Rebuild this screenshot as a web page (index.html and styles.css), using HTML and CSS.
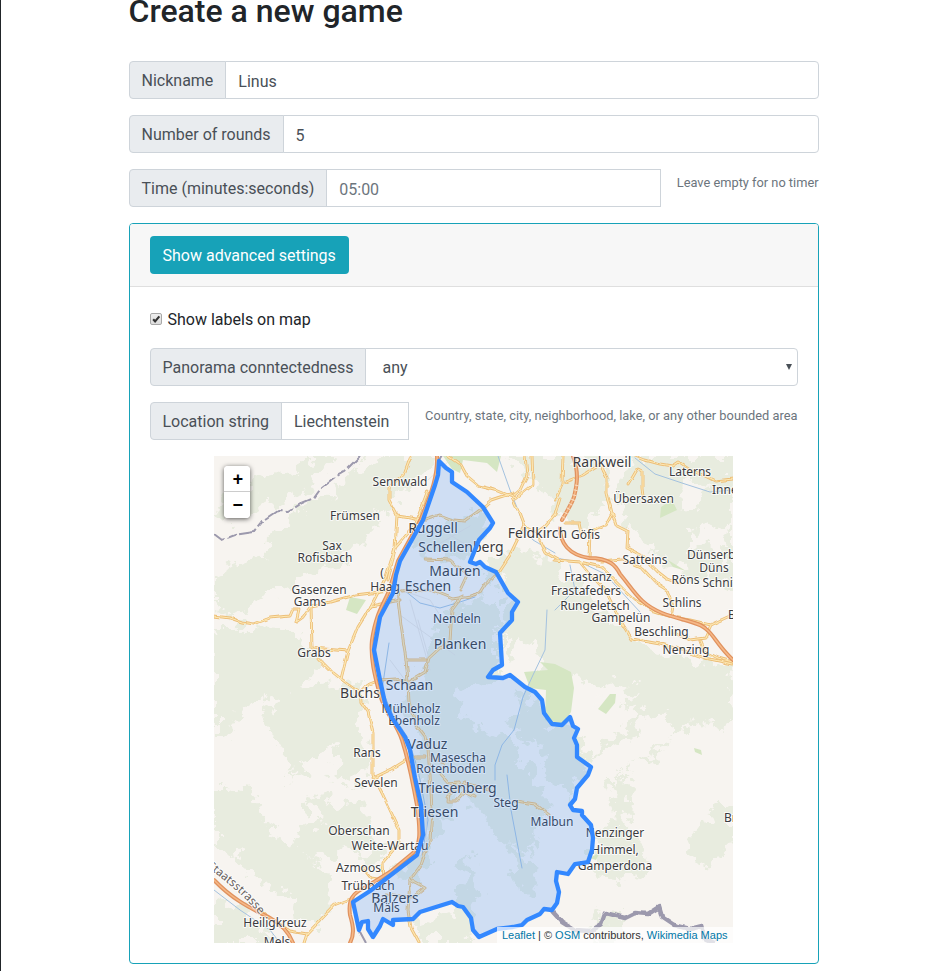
FILE: index.html
```html
<!DOCTYPE html>
<html lang="en">
<head>
<meta charset="utf-8">
<title>Create a new game</title>
<link rel="stylesheet" href="styles.css">
</head>
<body>
<main class="container">
  <h2 class="title">Create a new game</h2>
  <form>
    <div class="group"><label class="tag" for="nick">Nickname</label><input class="field end" id="nick" type="text" value="Linus"></div>
    <div class="group"><label class="tag" for="rounds">Number of rounds</label><input class="field end" id="rounds" type="text" value="5"></div>
    <div class="group"><label class="tag" for="time">Time (minutes:seconds)</label><input class="field" id="time" type="text" placeholder="05:00"><small class="hint short">Leave empty for no timer</small></div>
    <section class="card">
      <header class="card-header"><button class="btn" type="button">Show advanced settings</button></header>
      <div class="card-body">
        <label class="check"><span class="box"><svg viewBox="0 0 12 12"><path d="M2.6 6.4 4.9 8.8 10 2.8"/></svg></span><span class="check-text">Show labels on map</span></label>
        <div class="group"><span class="tag tight">Panorama conntectedness</span><div class="field end select"><span>any</span><svg class="arrow" viewBox="0 0 6 6"><path d="M0 0h6L3 6z"/></svg></div></div>
        <div class="group"><label class="tag" for="loc">Location string</label><input class="field loc" id="loc" type="text" value="Liechtenstein"><small class="hint">Country, state, city, neighborhood, lake, or any other bounded area</small></div>
        <div class="map">
          <svg class="tiles" viewBox="214 456 519 487" preserveAspectRatio="none">
            <defs>
              <filter id="rough" x="-5%" y="-5%" width="110%" height="110%"><feTurbulence type="fractalNoise" baseFrequency=".07" numOctaves="4" seed="4"/><feDisplacementMap in="SourceGraphic" scale="34" xChannelSelector="R" yChannelSelector="G"/></filter>
              <filter id="wobble" x="-5%" y="-5%" width="110%" height="110%"><feTurbulence type="fractalNoise" baseFrequency=".08" numOctaves="2" seed="7"/><feDisplacementMap in="SourceGraphic" scale="4" xChannelSelector="R" yChannelSelector="G"/></filter>
              <g id="roads">
                <path d="M214 616 230 618 242 622 254 624 270 618 290 616 293 609 299 609 296 622 303 617 311 606 330 602 355 595 388 591"/>
                <path d="M311 606 312 648 348 651M371 606 358 627 348 651 341 679M318 658 330 670 341 679 360 692 367 685 380 680 396 679 410 682"/>
                <path d="M360 692 361 702 368 712 373 733 373 775 382 793 399 829 399 843 383 862 384 880M373 778 392 769 408 759M384 880 371 878 363 868M353 898 335 905 307 934 304 943M307 934 290 931 269 918 262 912"/>
                <path d="M411 456 404 475 389 488 389 500 397 515 395 549 388 580M397 515 411 517 425 520 440 515 453 520 465 521 480 510 491 500 500 497 513 493"/>
                <path d="M400 600 371 606 386 577 395 548 415 525 428 490"/>
                <path d="M448 456 461 465 467 476 479 486 495 490 507 495 516 498 533 484 532 456M525 456 527 475 520 490 512 497 518 510 524 526 537 533 546 552 560 560M524 526 510 555 500 570 485 585 480 593 470 596 453 599 430 590 401 592"/>
                <path d="M560 498 555 515 544 528 537 533M565 482 583 475 600 464 607 478 607 493 612 513 616 524 628 530 627 548 641 555 658 572 667 579 680 584"/>
                <path d="M563 456 562 484 555 500M565 523 580 523 582 533M612 513 605 526 590 532 589 558 602 561 622 559M555 560 580 562 601 567 623 589 635 600 655 612 671 617M580 562 590 574 605 590 620 620 632 639 660 644 682 650 705 658 733 664"/>
                <path d="M623 559 642 568 656 583 667 590 673 606 671 617 690 620 711 625 733 615M711 625 705 638 690 640 675 633M700 641 704 651 718 658 733 662"/>
                <path d="M635 456 645 460 660 464 672 466 678 462 690 470 705 476 715 481 733 479M628 485 638 468 642 470 642 488 643 495"/>
                <path d="M397 590 401 625 406 660 408 681 409 703 415 723 425 736 428 750 430 775 432 810 430 840 421 865 410 880 408 910 411 928 419 943"/>
                <path d="M410 681 425 672 429 658 440 648 450 641 452 610 458 602 462 595M406 660 426 660M460 590 467 575 450 560 425 559"/>
                <path d="M415 757 425 757M430 758 445 762 441 775 448 783 459 782 449 792 448 802 455 802 465 791 475 796M447 797 465 783 490 790M515 801 535 804 549 815M410 880 425 888 414 897 400 896 386 894"/>
              </g>
              <path id="motorway" d="M437 456 C438 480 428 500 421 519 L398 561 389 591 C382 607 376 614 372 640 C370 660 376 680 380 695 C386 715 396 722 402 740 C410 765 412 780 417 805 C421 835 420 845 413 853 L390 872 366 887 C352 893 348 900 350 915 C354 928 354 935 350 943M560 528 C560 543 569 555 589 558 C610 558 616 566 620 574 C635 592 640 604 662 613 C680 620 700 622 706 629 C714 635 718 646 733 660M573 456 C580 475 576 488 574 497 Q572 503 562 520M214 880 C235 902 255 910 270 918 C285 926 290 935 293 943"/>
            </defs>
            <rect x="214" y="456" width="519" height="487" fill="#f7f4f0"/>
            <g fill="#e8ecdf" filter="url(#rough)">
              <path d="M380 456 440 456 395 500 355 550 315 575 270 595 235 615 214 610 214 575 260 555 300 510 345 485 365 460ZM214 520 240 523 262 507 295 497 325 475 330 456 310 456 290 473 250 483 225 500Z"/>
              <path d="M214 626 280 628 325 655 300 690 250 705 225 735 214 735ZM280 690 370 680 355 735 330 750 290 775 280 740 265 725ZM350 718 370 738 368 765 355 790 330 778ZM330 725 300 778 286 787 312 750Z"/>
              <path d="M214 785 250 790 275 840 325 865 330 895 305 900 270 885 214 840ZM295 830 345 820 350 850 320 860 290 850ZM305 795 355 805 390 850 375 865 335 840ZM300 885 340 900 320 920 294 920ZM214 900 240 905 280 943 214 943Z"/>
              <path d="M500 456 600 456 610 500 585 530 555 515 535 477ZM630 456 733 456 733 590 700 580 665 560 625 525 620 490Z"/>
              <path d="M480 565 520 548 560 565 590 600 650 650 733 670 733 700 690 720 640 715 610 690 570 680 540 683 510 665 500 625 518 600Z"/>
              <path d="M735 690 650 710 600 745 585 760 620 745 650 715 680 715 665 750 620 775 615 790 640 760 695 725 733 722ZM605 775 630 775 628 830 645 850 620 865 595 840 617 820ZM590 850 640 850 650 870 625 880 590 875ZM700 820 733 800 733 840 705 870 690 855Z"/>
              <path d="M450 605 500 600 500 672 480 700 430 740 400 710 425 660ZM415 735 450 715 510 740 530 770 550 800 530 850 500 840 475 805 455 790 430 860 415 885 390 875 425 840ZM520 690 550 720 530 745 505 725ZM535 730 575 720 590 765 565 800 545 770Z"/>
              <path d="M410 535 470 520 480 505 490 525 465 560 415 550ZM470 850 480 910 470 930 455 900ZM515 840 540 880 520 900ZM600 910 620 906 622 943 590 943ZM420 920 460 907 475 943 420 943Z"/>
            </g>
            <g fill="#f7f4f0" filter="url(#rough)"><path d="M455 690 505 680 525 710 505 732 470 725ZM520 640 540 650 535 690 505 676ZM680 480 710 488 700 510 675 503ZM690 530 733 524 718 550 690 548ZM610 505 623 514 615 523ZM605 680 625 690 640 688 615 710 600 705Z"/></g>
            <g fill="#d5e6c3"><path d="M443 456H501L497 472 487 463 463 460 460 473 452 469ZM524 672 548 670 540 662 555 664 571 672 574 688 571 712 560 727 545 720 546 690 530 688ZM350 597 366 600 357 614 346 610ZM610 694 616 694 615 703 606 714 598 709ZM694 748 701 750 702 755 695 752ZM661 507 672 500 677 510 660 518ZM668 560 686 571 673 567ZM590 858 600 852 596 860Z"/></g>
            <g class="water"><path d="M498 456 510 490 526 530 533 540 555 553M404 590 420 603 440 608 460 602 475 597M547 610 545 650 533 675 523 697 514 730 502 745 495 765 495 780M389 643 382 690 393 715 408 738 418 770 428 820 422 855M507 775 511 810 522 868M635 458 655 474 685 484 710 492 733 490M555 558 580 562 605 574 640 612M214 890 240 910 270 930 280 943M718 645 733 663M555 610 575 590 570 565"/></g>
            <g class="lanes"><path d="M401 590 430 600 447 626M400 615 455 655M410 600 430 670M418 620 428 655M390 660 405 680M428 750 426 850M450 535 475 550M428 480 450 460M437 545 470 526"/></g>
            <use href="#roads" class="road-case" filter="url(#wobble)"/><use href="#roads" class="road" filter="url(#wobble)"/>
            <use href="#motorway" class="mw-case"/><use href="#motorway" class="mw"/>
            <path class="mw-dash" d="M577 485 574 497 Q572 503 562 520"/>
            <g class="border" filter="url(#wobble)"><path stroke-dasharray="18 3 9 3" d="M360 456 344 472 335 477 322 487 314 498 302 503 288 512 278 511 263 521 254 532 235 535 222 540 214 534"/><path class="thick" d="M552 911 562 922 575 930 590 931 601 924 605 913 625 918 635 913 648 914 659 907 662 917 674 925 690 929 702 926 706 940 714 943"/><path d="M359 930 366 943M439 461 442 456"/></g>
            <g class="labels">
              <g class="town"><text x="602" y="467">Rankweil</text><text x="537.5" y="538">Feldkirch</text><text x="433" y="533">Ruggell</text><text x="461" y="552">Schellenberg</text><text x="455" y="576">Mauren</text><text x="428" y="591">Eschen</text><text x="460" y="649">Planken</text><text x="409.5" y="690">Schaan</text><text x="360" y="698">Buchs</text><text x="427.5" y="749">Vaduz</text><text x="457.5" y="793">Triesenberg</text><text x="434.5" y="817">Triesen</text><text x="395" y="903">Balzers</text></g>
              <text x="400" y="486">Sennwald</text><text x="355" y="520">Frümsen</text><text x="332" y="550">Sax</text><text x="325" y="562">Rofisbach</text><text x="319" y="594">Gasenzen</text><text x="310" y="606">Gams</text><text x="385" y="591">Haag</text><text x="382" y="577">(</text><text x="314" y="657">Grabs</text><text x="457" y="623">Nendeln</text><text x="411" y="713">Mühleholz</text><text x="414" y="725">Ebenholz</text><text x="367" y="757">Rans</text><text x="458" y="762">Masescha</text><text x="451" y="773">Rotenboden</text><text x="376" y="787">Sevelen</text><text x="506" y="807">Steg</text><text x="552" y="826">Malbun</text><text x="359" y="835">Oberschan</text><text x="390" y="850">Weite-Wartau</text><text x="358.5" y="872">Azmoos</text><text x="368" y="890">Trübbach</text><text x="386.5" y="912">Mäls</text><text x="275" y="927">Heiligkreuz</text><text x="277" y="945.5">Mels</text><text x="615" y="837">Nenzinger</text><text x="615" y="854">Himmel,</text><text x="615" y="870">Gamperdona</text><text x="690" y="476">Laterns</text><text x="643.5" y="503">Übersaxen</text><text x="585.5" y="539">Göfis</text><text x="645" y="564">Satteins</text><text x="588" y="581">Frastanz</text><text x="586" y="595">Frastafeders</text><text x="595" y="610">Rungeletsch</text><text x="621" y="622">Gampelün</text><text x="661.5" y="636">Beschling</text><text x="686" y="654">Nenzing</text><text x="682" y="607">Schlins</text><text x="685.5" y="584">Röns</text><text x="714" y="572">Düns</text>
              <g class="start"><text x="712" y="494">Inner</text><text x="687" y="559">Dünserberg</text><text x="702.5" y="587">Schnifis</text><text x="728" y="619">Bludesch</text><text x="724" y="822">Brand</text></g>
              <path id="street" d="M207 867 C220 877 246 896 262 918" fill="none" stroke="none"/><text class="street"><textPath href="#street">Staatsstrasse</textPath></text>
            </g>
            <path class="area" d="M439 461 446 468 452 472 452 482 467 492 483 507 488 515 493 523 490 528 479 540 470 562 476 564 480 562 485 567 496 572 508 593 518 602 512 612 512 620 500 633 502 665 493 670 488 677 503 678 510 675 525 687 535 692 542 700 544 713 552 724 562 725 570 717 573 726 578 729 574 738 577 745 577 757 591 767 588 775 577 788 575 799 570 805 573 810 582 811 582 815 591 825 593 838 592 850 588 862 575 864 568 874 557 872 556 881 559 892 557 903 552 910 544 909 540 914 527 920 522 925 513 927 497 929 479 937 473 930 471 918 463 907 458 906 452 902 420 912 413 919 393 920 393 925 383 919 380 926 373 937 368 929 368 921 362 922 359 930 353 902 370 891 417 855 423 835 421 805 415 778 410 750 405 737 392 718 385 703 380 680 374 650 380 617 393 593 396 575 400 561 423 520 435 485 438 475Z"/>
          </svg>
          <div class="zoom-bar"><button class="zoom-btn" type="button">+</button><button class="zoom-btn" type="button">−</button></div>
          <div class="credit"><a>Leaflet</a> | © <a>OSM</a> contributors, <a>Wikimedia Maps</a></div>
        </div>
      </div>
    </section>
  </form>
</main>
</body>
</html>
```
FILE: styles.css
```css
*{box-sizing:border-box}
html{background:#fff;overflow:hidden}
body{margin:0;height:971px;border-left:1px solid #212529;font:400 16px/24px Roboto,sans-serif;color:#212529;overflow:hidden}
input,button{font:inherit;margin:0}
.container{width:690px;margin-left:127.5px}
.title{margin:0;padding-bottom:31px;font-size:32px;font-weight:500;line-height:38px;margin-top:-8px}
.group{display:flex;height:38px;margin-bottom:16px}
.tag{display:flex;align-items:center;padding:2px 12px 0;border:1px solid #ced4da;border-radius:4px 0 0 4px;background:#e9ecef;color:#495057;white-space:nowrap}
.tag.tight{padding-right:11.5px}
.field{flex:1;min-width:0;margin-left:-1px;padding:4px 12px 0;border:1px solid #ced4da;border-radius:0;background:#fff;color:#495057;outline:0}
.field.end{border-radius:0 4px 4px 0}
.field.loc{padding-top:2px}
.field::placeholder{color:#6c757d;opacity:1}
.hint{margin-left:16px;padding-top:4px;font-size:12.8px;line-height:19px;letter-spacing:.018px;color:#6c757d;white-space:nowrap}
.hint.short{letter-spacing:0}
.card{height:741px;border:1px solid #17a2b8;border-radius:4px}
.card-header{height:63px;padding:12px 20px;background:#f7f7f7;border-bottom:1px solid #dfdfdf;border-radius:3px 3px 0 0}
.btn{display:block;height:38px;padding:2px 13px 0;border:0;border-radius:4px;background:#17a2b8;color:#fff}
.card-body{padding:20px}
.check{display:flex;align-items:center;height:24px;margin-bottom:17px}
.check-text{padding-top:2px}
.box{width:12px;height:12px;margin-right:6px;border:1px solid #a8a8a8;border-radius:2px;background:linear-gradient(#eee,#ddd);display:flex}
.box svg{width:10px;height:10px;fill:none;stroke:#333;stroke-width:2.6}
.field.select{display:flex;align-items:center;justify-content:space-between;padding:0 5px 0 16.5px}
.select span{padding-top:2px}
.arrow{width:6px;height:6px;fill:#495057}
.map{position:relative;width:519px;height:487px;margin-left:64px;overflow:hidden}
.tiles{display:block;width:519px;height:487px;fill:none;stroke-linejoin:round;stroke-linecap:round}
.road-case{stroke:#ecbe78;stroke-width:2.9}
.road{stroke:#fde8b4;stroke-width:1.2}
.mw-case{stroke:#e0925f;stroke-width:4}
.mw{stroke:#f6b988;stroke-width:1.5}
.mw-dash{stroke:#f8dcc2;stroke-width:4;stroke-dasharray:1 4;stroke-linecap:butt}
.water{stroke:#a4c2df;stroke-width:1}
.lanes{stroke:#e3dfdc;stroke-width:.8}
.border{stroke:#9c99ad;stroke-width:2;stroke-linecap:butt}
.thick{stroke-width:4.5}
.labels{font:12px "Noto Sans",sans-serif;fill:#3b3b40;stroke:#fff;stroke-opacity:.75;stroke-width:2;paint-order:stroke;text-anchor:middle}
.town{font-size:14px}
.start{text-anchor:start}
.street{text-anchor:start;font-size:11.5px;fill:#665e5c}
.area{fill:#38f;fill-opacity:.2;stroke:#38f;stroke-width:4.3}
.zoom-bar{position:absolute;left:10px;top:10px;width:26px;height:52px;border-radius:4px;background:#fff;box-shadow:0 1px 5px rgba(0,0,0,.65);overflow:hidden}
.zoom-btn{display:block;width:26px;height:26px;padding:1px 0 0 3px;border:0;background:#fff;color:#000;font:700 18px/26px "Liberation Mono",monospace;text-align:center}
.zoom-btn:first-child{border-bottom:1px solid #ccc}
.credit{position:absolute;right:0;bottom:0;padding:0 5px;background:rgba(255,255,255,.7);color:#333;font:11px/16px "Liberation Sans",sans-serif;white-space:nowrap}
.credit a{color:#0078a8}
```
